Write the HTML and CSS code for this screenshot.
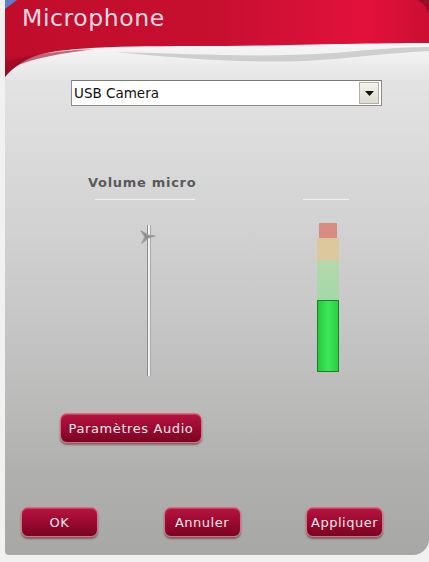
FILE: index.html
```html
<!DOCTYPE html>
<html lang="fr">
<head>
<meta charset="utf-8">
<title>Microphone</title>
<link rel="stylesheet" href="styles.css">
</head>
<body>
<div class="window">
  <div class="header">
    <svg class="wave" viewBox="0 0 424 80" preserveAspectRatio="none" aria-hidden="true">
      <defs>
        <linearGradient id="redH" x1="0" y1="0" x2="1" y2="0">
          <stop offset="0" stop-color="#c10d2c"/>
          <stop offset="0.5" stop-color="#c70f30"/>
          <stop offset="0.85" stop-color="#e2113c"/>
          <stop offset="1" stop-color="#cc0e32"/>
        </linearGradient>
        <linearGradient id="redV" x1="0" y1="0" x2="0" y2="1">
          <stop offset="0" stop-color="#000" stop-opacity="0"/>
          <stop offset="0.7" stop-color="#000" stop-opacity="0"/>
          <stop offset="1" stop-color="#400010" stop-opacity="0.35"/>
        </linearGradient>
        <linearGradient id="light" x1="0" y1="0" x2="0" y2="1">
          <stop offset="0.5" stop-color="#f8f8f8"/>
          <stop offset="1" stop-color="#e5e5e5"/>
        </linearGradient>
      </defs>
      <rect x="0" y="0" width="424" height="80" fill="url(#light)"/>
      <path d="M110 52 C190 54 260 58 330 53 C360 50 400 47 424 47 V51 C380 53 340 59 300 61 C240 63 180 59 110 52 Z" fill="#c6c6c6" opacity="0.8"/>
      <path d="M0 0 H424 V43 C360 43 300 45 220 46 C130 46 60 46 30 56 C15 62 6 70 0 77 Z" fill="url(#redH)"/>
      <path d="M0 0 H424 V43 C360 43 300 45 220 46 C130 46 60 46 30 56 C15 62 6 70 0 77 Z" fill="url(#redV)"/>
      <path d="M0 63 C20 55 50 51 90 49 C50 54 20 60 0 71 Z" fill="#9e0a24" opacity="0.6"/>
      <path d="M0 0 H12 L0 9 Z" fill="#5b7fc9"/>
      <path d="M412 0 H424 V14 C421 6 417 2 412 0 Z" fill="#7a1020" opacity="0.7"/>
    </svg>
    <h1 class="title">Microphone</h1>
  </div>

  <div class="device">
    <div class="select">
      <span class="select-text">USB Camera</span>
      <span class="select-btn">
        <svg width="9" height="5" viewBox="0 0 9 5" aria-hidden="true"><path d="M0 0 H9 L4.5 5 Z" fill="#111"/></svg>
      </span>
    </div>
  </div>

  <div class="mixer">
    <div class="volume">
      <div class="label">Volume micro</div>
      <div class="rule rule-label"></div>
      <div class="slider">
        <div class="track"></div>
        <svg class="thumb" width="18" height="14" viewBox="0 0 18 14" aria-hidden="true">
          <path d="M2 1 L9 5 L16 6 L9 8 L3 13 L6 7 Z" fill="#8d8d8d" stroke="#9c9c9c" stroke-width="1.2" stroke-linejoin="round"/>
        </svg>
      </div>
    </div>
    <div class="level">
      <div class="rule rule-meter"></div>
      <div class="meter">
        <div class="seg seg-red"></div>
        <div class="seg seg-yellow"></div>
        <div class="seg seg-pale"></div>
        <div class="seg seg-green"></div>
      </div>
    </div>
  </div>

  <div class="audio-row">
    <button class="btn btn-audio">Paramètres Audio</button>
  </div>

  <div class="actions">
    <button class="btn btn-small">OK</button>
    <button class="btn btn-small">Annuler</button>
    <button class="btn btn-small">Appliquer</button>
  </div>
</div>
</body>
</html>
```

FILE: styles.css
```css
html, body {
  margin: 0;
  padding: 0;
}

body {
  background: #f1f1f1;
  font-family: "DejaVu Sans", Verdana, sans-serif;
  width: 429px;
  height: 562px;
  overflow: hidden;
}

.window {
  margin-left: 5px;
  width: 424px;
  height: 555px;
  background: linear-gradient(to bottom, #e8e8e8 0px, #e2e2e2 90px, #c9c9c9 300px, #b0b1af 470px, #a7a8a6 555px);
  border-bottom-right-radius: 16px;
  border-bottom-left-radius: 4px;
  overflow: hidden;
}

.header {
  position: relative;
  height: 75px;
}

.wave {
  position: absolute;
  left: 0;
  top: 0;
  width: 424px;
  height: 80px;
}

.title {
  position: relative;
  margin: 0;
  padding: 3px 0 0 17px;
  font-family: "DejaVu Sans", Verdana, sans-serif;
  font-weight: normal;
  font-size: 23.5px;
  line-height: 30px;
  color: #f6dbe2;
  letter-spacing: 0.6px;
}

.device {
  padding: 5px 0 0 66px;
}

.select {
  width: 309px;
  height: 24px;
  background: #ffffff;
  border: 1px solid #8e8e86;
  border-top-color: #7b7b73;
  display: flex;
  align-items: center;
  justify-content: space-between;
}

.select-text {
  font-family: "DejaVu Sans", Tahoma, sans-serif;
  font-size: 13.5px;
  color: #111;
  padding-left: 2px;
}

.select-btn {
  width: 18px;
  height: 20px;
  margin-right: 2px;
  background: linear-gradient(#f4f4ee, #dcdcd2);
  border: 1px solid #b0b0a8;
  display: flex;
  align-items: center;
  justify-content: center;
}

.mixer {
  display: flex;
  margin-top: 69px;
}

.volume {
  width: 212px;
  padding-left: 83px;
}

.label {
  font-family: "DejaVu Sans", Verdana, sans-serif;
  font-weight: bold;
  font-size: 13px;
  line-height: 16px;
  letter-spacing: 0.7px;
  color: #5a5a5a;
}

.rule {
  height: 1px;
  background: #d8d8d8;
  box-shadow: 0 1px 0 #efefef;
}

.rule-label {
  width: 100px;
  margin: 7px 0 0 7px;
}

.slider {
  position: relative;
  width: 40px;
  height: 151px;
  margin: 26px 0 0 40px;
}

.track {
  width: 2px;
  height: 151px;
  margin-left: 19px;
  background: #eef3f2;
  border-left: 1px solid #8c8c8c;
  border-right: 1px solid #a8a8a8;
}

.thumb {
  position: absolute;
  left: 11px;
  top: 5px;
}

.level {
  padding-top: 23px;
  margin-left: 17px;
}

.rule-meter {
  width: 46px;
  margin-left: -14px;
}

.meter {
  margin-top: 24px;
  width: 22px;
  display: flex;
  flex-direction: column;
}

.seg-red {
  height: 15px;
  margin: 0 2px;
  background: #d98d82;
}

.seg-yellow {
  height: 22px;
  background: #dcc89c;
}

.seg-pale {
  height: 40px;
  background: linear-gradient(#b4d8ac, #a4d8a8);
}

.seg-green {
  height: 72px;
  background: linear-gradient(to right, #26c93e, #3fe65a 50%, #2ad044);
  border: 1px solid #1c7d2a;
  box-sizing: border-box;
}

.audio-row {
  padding: 37px 0 0 55px;
}

.btn {
  font-family: "DejaVu Sans", Verdana, sans-serif;
  font-size: 13px;
  color: #f7e8ea;
  background: linear-gradient(to bottom, #b71440 0%, #9a0a30 50%, #7c0422 100%);
  border: 1px solid #d66f82;
  border-radius: 7px;
  box-shadow: 0 2px 2px rgba(60, 0, 10, 0.45), inset 0 1px 0 rgba(255, 140, 160, 0.35);
  padding: 0;
  height: 30px;
  cursor: pointer;
}

.btn-audio {
  width: 142px;
  letter-spacing: 0.6px;
}

.actions {
  display: flex;
  justify-content: space-between;
  padding: 64px 46px 0 16px;
}

.btn-small {
  width: 77px;
  letter-spacing: 0.5px;
}
```
